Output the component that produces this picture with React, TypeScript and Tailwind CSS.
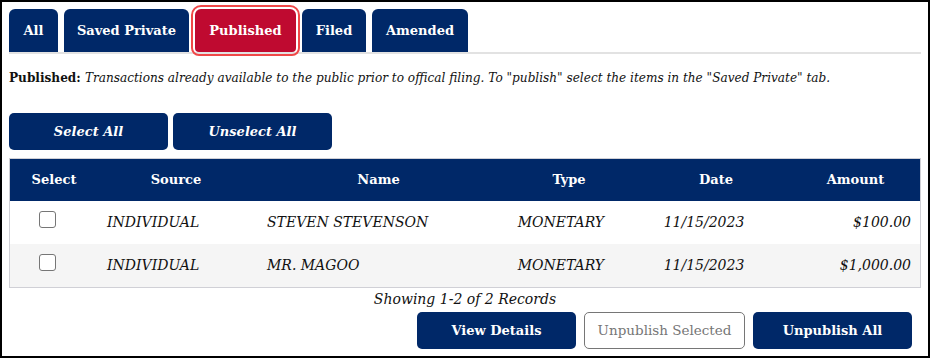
import React from 'react';

const tabs = ['All', 'Saved Private', 'Published', 'Filed', 'Amended'];
const tabWidths: Record<string, string> = {
  All: 'w-[49px]',
  'Saved Private': 'w-[125px]',
  Published: 'w-[101px]',
  Filed: 'w-[64px]',
  Amended: 'w-[96px]',
};

const rows = [
  { source: 'INDIVIDUAL', name: 'STEVEN STEVENSON', type: 'MONETARY', date: '11/15/2023', amount: '$100.00' },
  { source: 'INDIVIDUAL', name: 'MR. MAGOO', type: 'MONETARY', date: '11/15/2023', amount: '$1,000.00' },
];

const cols = 'grid grid-cols-[86px_160px_245px_136px_158px_1fr]';

export default function App() {
  return (
    <div className="w-[930px] h-[358px] bg-white border-2 border-black font-['DejaVu_Serif',Georgia,serif] text-[#111] overflow-hidden">
      <div className="px-[7px] pt-[7px]">
        {/* Tabs */}
        <div className="flex gap-[6px] border-b-2 border-[#e2e2e2]">
          {tabs.map((t) => {
            const active = t === 'Published';
            return (
              <div
                key={t}
                className={`${tabWidths[t]} h-[43px] rounded-t-[6px] flex items-center justify-center text-[13px] font-bold text-white ${
                  active ? 'bg-[#bf0a30] outline-2 outline-offset-2 outline-[#f04848] rounded-b-[4px]' : 'bg-[#002868]'
                }`}
              >
                {t}
              </div>
            );
          })}
        </div>

        <p className="mt-[17px] text-[12.1px] leading-[14px]">
          <span className="font-bold">Published: </span>
          <i>Transactions already available to the public prior to offical filing. To "publish" select the items in the "Saved Private" tab.</i>
        </p>

        {/* Select buttons */}
        <div className="flex gap-[5px] mt-[28px]">
          <button className="w-[159px] h-[37px] rounded-[5px] bg-[#002868] text-white text-[13px] font-bold italic">Select All</button>
          <button className="w-[159px] h-[37px] rounded-[5px] bg-[#002868] text-white text-[13px] font-bold italic">Unselect All</button>
        </div>

        {/* Table */}
        <div className="mt-[8px] border border-[#d0d0d6]">
          <div className={`${cols} h-[42px] bg-[#002868] text-white text-[13px] font-bold items-center text-center`}>
            <div className="pl-[2px]">Select</div>
            <div>Source</div>
            <div>Name</div>
            <div>Type</div>
            <div>Date</div>
            <div className="pr-[4px]">Amount</div>
          </div>
          {rows.map((r, i) => (
            <div
              key={i}
              className={`${cols} h-[43px] items-center text-[14px] italic ${i % 2 ? 'bg-[#f5f5f5]' : 'bg-white'}`}
            >
              <div className="flex pl-[29px]">
                <span className="w-[17px] h-[17px] rounded-[3px] border border-[#767676] bg-white mb-[6px]" />
              </div>
              <div className="pl-[11px]">{r.source}</div>
              <div className="pl-[11px]">{r.name}</div>
              <div className="text-right pr-[33px]">{r.type}</div>
              <div className="text-center pr-[24px]">{r.date}</div>
              <div className="text-right pr-[9px]">{r.amount}</div>
            </div>
          ))}
        </div>

        <p className="text-center italic text-[14px] leading-[18px] mt-[2px]">Showing 1-2 of 2 Records</p>

        {/* Actions */}
        <div className="flex justify-end gap-[8px] mt-[4px] mr-[9px]">
          <button className="w-[159px] h-[37px] rounded-[5px] bg-[#002868] text-white text-[13px] font-bold">View Details</button>
          <button className="w-[161px] h-[37px] rounded-[5px] bg-white border border-[#767676] text-[#767676] text-[13.5px]">Unpublish Selected</button>
          <button className="w-[159px] h-[37px] rounded-[5px] bg-[#002868] text-white text-[13px] font-bold">Unpublish All</button>
        </div>
      </div>
    </div>
  );
}
